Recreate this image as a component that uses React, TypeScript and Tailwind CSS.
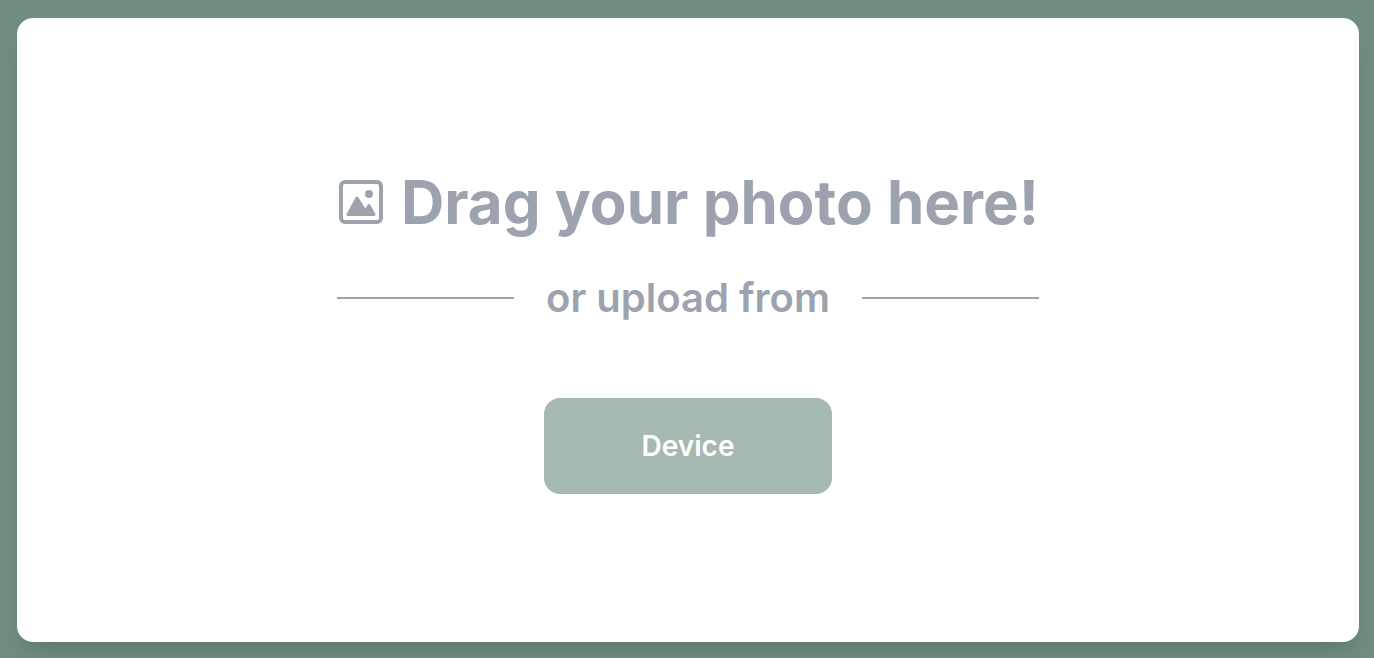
export default function App() {
  return (
    <main className="flex min-h-screen bg-[#6f8e80] pt-[18px] pr-[15px] pb-4 pl-[17px] font-['Inter',sans-serif]">
      <section className="flex flex-1 flex-col items-center justify-center rounded-2xl bg-white text-[#9ca3af] shadow-[0_20px_30px_-6px_rgba(0,0,0,0.1),0_8px_12px_-8px_rgba(0,0,0,0.1)]">
        <div className="flex flex-col items-center">
          <h1 className="flex items-center gap-4 text-6xl leading-[72px] font-bold">
            <svg className="size-12" viewBox="0 0 48 48" fill="none" aria-hidden="true">
              <rect x="4" y="4" width="40" height="40" rx="4" stroke="currentColor" strokeWidth="4" />
              <circle cx="32" cy="16" r="4" fill="currentColor" />
              <path
                d="M11 36.5 20 20l8.300 13L32 27.500l5 9Z"
                fill="currentColor"
                stroke="currentColor"
                strokeWidth="3"
                strokeLinejoin="round"
              />
            </svg>
            Drag your photo here!
          </h1>
          <div className="mt-8 flex w-full items-center gap-8">
            <span className="h-0.5 flex-1 bg-[#9ca3af]" />
            <p className="text-[40px] leading-14 font-semibold">or upload from</p>
            <span className="h-0.5 flex-1 bg-[#9ca3af]" />
          </div>
          <button type="button" className="mt-18 h-24 w-72 rounded-2xl bg-[#a5b9b0] text-[28px] font-semibold text-white">
            Device
          </button>
        </div>
      </section>
    </main>
  );
}
